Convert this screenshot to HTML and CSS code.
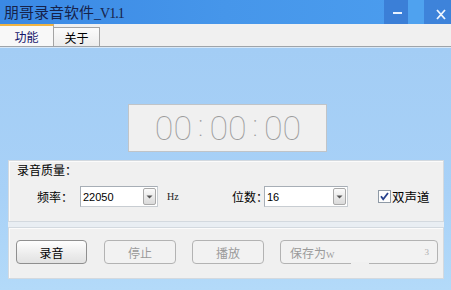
FILE: index.html
```html
<!DOCTYPE html>
<html lang="zh-CN">
<head>
<meta charset="utf-8">
<title>朋哥录音软件_V1.1</title>
<link rel="stylesheet" href="styles.css">
</head>
<body>
<div class="window">
  <div class="titlebar">
    <div class="title">朋哥录音软件<span class="ver">_V1.1</span></div>
    <div class="winbtn min">
      <svg width="24" height="24" viewBox="0 0 24 24"><rect x="9" y="12" width="9" height="2" fill="#e8f2ff"/></svg>
    </div>
    <div class="winbtn-gap"></div>
    <div class="winbtn close">
      <svg width="27" height="24" viewBox="0 0 27 24"><path d="M13 10 L21 19 M21 10 L13 19" stroke="#eef5ff" stroke-width="1.8" fill="none"/></svg>
    </div>
  </div>
  <div class="tabs">
    <div class="tab active">功能</div>
    <div class="tab">关于</div>
  </div>
  <div class="content">
    <div class="timer">
      <span class="pair">00</span><span class="colon">:</span><span class="pair">00</span><span class="colon">:</span><span class="pair">00</span>
    </div>
    <div class="panel">
      <div class="group g1">
        <div class="legend">录音质量：</div>
        <div class="row">
          <span class="lbl lbl-rate">频率：</span>
          <div class="combo combo-rate">
            <span class="combo-text">22050</span>
            <span class="drop"><svg width="7" height="4" viewBox="0 0 7 4"><path d="M0.5 0.5 L6.5 0.5 L3.5 3.5 Z" fill="#555"/></svg></span>
          </div>
          <span class="unit">Hz</span>
          <span class="lbl lbl-bits">位数：</span>
          <div class="combo combo-bits">
            <span class="combo-text">16</span>
            <span class="drop"><svg width="7" height="4" viewBox="0 0 7 4"><path d="M0.5 0.5 L6.5 0.5 L3.5 3.5 Z" fill="#555"/></svg></span>
          </div>
          <span class="check">
            <svg width="13" height="13" viewBox="0 0 13 13"><rect x="0.5" y="0.5" width="12" height="12" fill="#fdfdfd" stroke="#8f9aa6"/><path d="M3 6.2 L5.2 9.3 L10 3" stroke="#26408c" stroke-width="1.8" fill="none"/></svg>
          </span>
          <span class="check-label">双声道</span>
        </div>
      </div>
      <div class="group g2">
        <button class="btn btn-rec">录音</button>
        <button class="btn btn-off btn-stop">停止</button>
        <button class="btn btn-off btn-play">播放</button>
        <button class="btn btn-off btn-save"><span class="save-text">保存为<span class="w">W</span></span><span class="save-end">3</span><span class="gap-cover"></span></button>
      </div>
    </div>
  </div>
</div>
</body>
</html>
```

FILE: styles.css
```css
* { box-sizing: border-box; }
html, body { margin: 0; padding: 0; }
body {
  width: 451px;
  height: 290px;
  overflow: hidden;
  font-family: "Noto Sans CJK SC", "Noto Sans", sans-serif;
  font-size: 12px;
  color: #000;
}
.window { width: 451px; height: 290px; display: flex; flex-direction: column; }

.titlebar {
  height: 24px;
  display: flex;
  align-items: stretch;
  background: linear-gradient(90deg, #3a89e5 0%, #4696ea 50%, #4c9eef 100%);
}
.title {
  padding-left: 4px;
  line-height: 24px;
  font-size: 15px;
  color: #16224a;
  white-space: nowrap;
}
.ver {
  font-family: "Liberation Serif", serif;
  font-size: 14px;
  letter-spacing: -1px;
}
.winbtn { height: 24px; }
.min { margin-left: auto; width: 24px; background: #3b7fd7; }
.winbtn-gap { width: 16px; background: #4fa2ef; }
.close { width: 27px; background: #3e83da; }

.tabs {
  height: 23px;
  display: flex;
  align-items: flex-end;
  background: #f0f0f0;
  border-bottom: 1px solid #9ea4aa;
}
.tab {
  display: flex;
  align-items: center;
  justify-content: center;
  font-size: 12px;
}
.tab.active {
  width: 54px;
  height: 22px;
  background: #f8f8f8;
  border-top: 2px solid #f0b444;
  border-right: 1px solid #a4a4a4;
  color: #15156a;
  padding-top: 1px;
}
.tab:not(.active) {
  width: 46px;
  height: 19px;
  border-top: 1px solid #a4a4a4;
  border-right: 1px solid #a4a4a4;
  background: linear-gradient(#fbfbfb, #ececec);
  color: #000;
}

.content {
  flex: 1;
  border-top: 1px solid #d7e7f7;
  background: linear-gradient(180deg, #a3cdf5 0%, #a8d1f7 60%, #b3daf9 100%);
}
.timer {
  margin: 56px 0 0 128px;
  width: 199px;
  height: 48px;
  background: #f0f0f0;
  border: 1px solid #c0c4c8;
  display: flex;
  align-items: center;
  justify-content: center;
  gap: 6px;
  padding-left: 1px;
  font-family: Roboto, "Open Sans", sans-serif;
  font-weight: 100;
  font-size: 34px;
  color: #9c9c9c;
  line-height: 1;
}
.colon { font-size: 30px; position: relative; top: -2px; }

.panel {
  margin: 8px 0 0 8px;
  width: 436px;
  background: #e9eef3;
  display: flex;
  flex-direction: column;
  gap: 5px;
}
.group {
  background: #f0f0f0;
  border: 1px solid #d3d9df;
  box-shadow: inset 1px 1px 0 #fbfbfb;
}
.g1 { height: 62px; }
.legend {
  display: inline-block;
  margin: -1px 0 0 6px;
  padding: 0 2px;
  height: 14px;
  line-height: 14px;
  background: #f0f0f0;
  font-size: 12px;
}
.row {
  margin-top: 8px;
  height: 21px;
  display: flex;
  align-items: center;
}
.lbl { font-size: 12px; white-space: nowrap; }
.lbl-rate { margin-left: 28px; width: 43px; }
.lbl-bits { width: 32px; }
.combo {
  height: 21px;
  background: #fff;
  border: 1px solid #a7aeb6;
  border-right-color: #c8cdd2;
  border-bottom-color: #c8cdd2;
  display: flex;
  align-items: center;
}
.combo-rate { width: 78px; }
.combo-bits { width: 84px; }
.combo-text {
  flex: 1;
  padding-left: 2px;
  font-family: "Liberation Sans", Arial, sans-serif;
  font-size: 11px;
}
.drop {
  width: 13px;
  height: 17px;
  margin-right: 1px;
  border: 1px solid #a9a9a9;
  border-radius: 2px;
  background: linear-gradient(#fbfbfb, #dadada);
  display: flex;
  align-items: center;
  justify-content: center;
}
.unit {
  margin-left: 9px;
  width: 65px;
  font-family: "Liberation Serif", serif;
  font-size: 10px;
  color: #222;
}
.check { margin-left: 30px; width: 13px; height: 13px; display: flex; }
.check-label { margin-left: 1px; font-size: 12.5px; }

.g2 {
  height: 52px;
  padding: 12px 0 0 7px;
  display: flex;
  align-items: flex-start;
}
.btn {
  height: 24px;
  margin: 0;
  padding: 0;
  border-radius: 4px;
  font-family: "Noto Sans CJK SC", sans-serif;
  font-size: 12px;
  display: flex;
  align-items: center;
  justify-content: center;
}
.btn-rec {
  width: 71px;
  border: 1px solid #8f8f8f;
  background: linear-gradient(#fefefe, #ececec 60%, #e2e2e2);
  color: #000;
}
.btn-off {
  border: 1px solid #b3b3b3;
  background: #f2f2f2;
  color: #9a9a9a;
}
.btn-stop { width: 72px; margin-left: 17px; }
.btn-play { width: 72px; margin-left: 16px; }
.btn-save {
  width: 158px;
  margin-left: 16px;
  justify-content: space-between;
  padding: 0 8px 0 9px;
  position: relative;
}
.save-text { white-space: nowrap; }
.w { font-family: "Liberation Serif", serif; font-size: 9px; }
.save-end { font-family: "Liberation Serif", serif; font-size: 9px; color: #b0b0b0; }
.gap-cover {
  position: absolute;
  left: 70px;
  bottom: -1px;
  width: 18px;
  height: 2px;
  background: #f0f0f0;
}
```
